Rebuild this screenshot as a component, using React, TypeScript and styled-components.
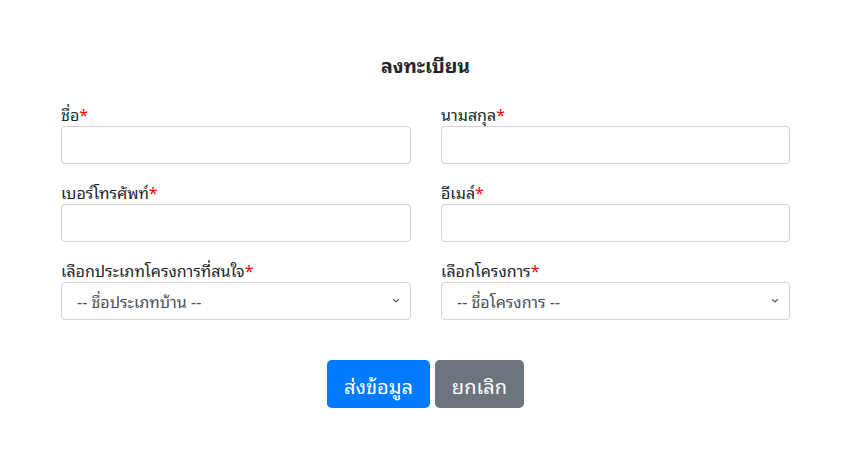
import styled, { createGlobalStyle } from 'styled-components';

const GlobalStyle = createGlobalStyle`
  * { box-sizing: border-box; }
  body {
    margin: 0;
    background: #fff;
    color: #212529;
    font-family: "Noto Sans Thai Looped", "Loma", "Garuda", "Tahoma", "Noto Sans Thai", "Noto Sans", "Liberation Sans", sans-serif;
    font-size: 16px;
    line-height: 1.5;
  }
`;

const Page = styled.div`
  width: 729px;
  margin: 0 0 0 61px;
  padding-top: 53px;
`;

const Title = styled.h4`
  margin: 0 0 26px;
  text-align: center;
  font-size: 19.5px;
  font-weight: 700;
  line-height: 1.2;
`;

const FormGrid = styled.form`
  display: grid;
  grid-template-columns: 350px 349px;
  column-gap: 30px;
  row-gap: 16px;
`;

const Field = styled.div`
  display: flex;
  flex-direction: column;
`;

const Label = styled.label`
  font-size: 16px;
  line-height: 24px;
`;

const Required = styled.span`
  color: #ff0000;
`;

const TextInput = styled.input`
  height: 38px;
  width: 100%;
  padding: 6px 12px;
  border: 1px solid #ced4da;
  border-radius: 4px;
  font: inherit;
  color: #495057;
  background: #fff;
`;

const Select = styled.select`
  height: 38px;
  width: 100%;
  padding: 6px 36px 6px 15px;
  border: 1px solid #ced4da;
  border-radius: 4px;
  font: inherit;
  color: #495057;
  appearance: none;
  background: #fff
    url("data:image/svg+xml,%3csvg xmlns='http://www.w3.org/2000/svg' viewBox='0 0 16 16'%3e%3cpath fill='none' stroke='%23555c63' stroke-linecap='round' stroke-linejoin='round' stroke-width='2.2' d='M3 5l5 5 5-5'/%3e%3c/svg%3e")
    no-repeat right 9px center / 10px 8px;
`;

const Actions = styled.div`
  display: flex;
  justify-content: center;
  gap: 5px;
  margin-top: 40px;
`;

const Button = styled.button<{ $tone: 'primary' | 'secondary' }>`
  height: 48px;
  padding: 2px 17px 0;
  border: none;
  border-radius: 4.8px;
  font-family: inherit;
  font-size: 20px;
  color: #fff;
  background: ${(p) => (p.$tone === 'primary' ? '#007bff' : '#6c757d')};
  cursor: pointer;
`;

const fields = [
  { label: 'ชื่อ', kind: 'input' },
  { label: 'นามสกุล', kind: 'input' },
  { label: 'เบอร์โทรศัพท์', kind: 'input' },
  { label: 'อีเมล์', kind: 'input' },
  { label: 'เลือกประเภทโครงการที่สนใจ', kind: 'select', placeholder: '-- ชื่อประเภทบ้าน --' },
  { label: 'เลือกโครงการ', kind: 'select', placeholder: '-- ชื่อโครงการ --' },
];

export default function App() {
  return (
    <>
      <GlobalStyle />
      <Page>
        <Title>ลงทะเบียน</Title>
        <FormGrid>
          {fields.map((f) => (
            <Field key={f.label}>
              <Label>
                {f.label}
                <Required>*</Required>
              </Label>
              {f.kind === 'input' ? (
                <TextInput type="text" />
              ) : (
                <Select defaultValue="">
                  <option value="">{f.placeholder}</option>
                </Select>
              )}
            </Field>
          ))}
        </FormGrid>
        <Actions>
          <Button type="button" $tone="primary">ส่งข้อมูล</Button>
          <Button type="button" $tone="secondary">ยกเลิก</Button>
        </Actions>
      </Page>
    </>
  );
}
